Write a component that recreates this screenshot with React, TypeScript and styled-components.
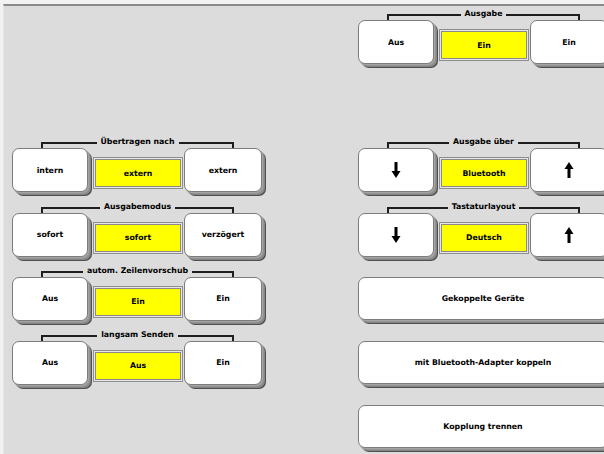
import styled, { createGlobalStyle } from 'styled-components';

const GlobalStyle = createGlobalStyle`
  html, body {
    margin: 0;
    padding: 0;
    overflow: hidden;
    background: #f2f2f2;
    font-family: "DejaVu Sans", Verdana, sans-serif;
  }
`;

const Frame = styled.div`
  width: 604px;
  height: 454px;
  box-sizing: border-box;
  padding: 4px 0 0 3px;
  background: #f2f2f2;
`;

const Panel = styled.div`
  height: 100%;
  box-sizing: border-box;
  border-top: 2px solid #8a8a8a;
  border-left: 1px solid #e6e6e6;
  background: #dcdcdc;
  padding: 2px 0 0 8px;
`;

const Board = styled.div`
  display: grid;
  grid-template-columns: 254px 254px;
  grid-template-rows: repeat(7, 64.2px);
  column-gap: 92px;
`;

const Cell = styled.div<{ $row: number; $col: number }>`
  grid-row: ${(p) => p.$row};
  grid-column: ${(p) => p.$col};
  display: flex;
  flex-direction: column;
`;

const Legend = styled.div`
  display: flex;
  height: 12px;
  margin: 0 32px 0 29px;
`;

const Arm = styled.div<{ $side: 'left' | 'right' }>`
  flex: 1;
  align-self: flex-end;
  height: 6px;
  box-sizing: border-box;
  border-top: 2px solid #1e1e1e;
  border-${(p) => p.$side}: 2px solid #1e1e1e;
`;

const LegendText = styled.span`
  padding: 0 4px;
  font-size: 7.8px;
  font-weight: bold;
  line-height: 12px;
  white-space: nowrap;
  color: #000;
`;

const Row = styled.div`
  display: flex;
  align-items: flex-start;
`;

const Key = styled.button<{ $wide?: boolean; $narrow?: boolean }>`
  width: ${(p) => (p.$wide ? 250 : p.$narrow ? 76 : 78)}px;
  height: ${(p) => (p.$wide ? 43 : 44)}px;
  flex: none;
  box-sizing: border-box;
  padding: 0;
  margin: 0;
  display: flex;
  align-items: center;
  justify-content: center;
  background: #ffffff;
  border: 1px solid #7c7c7c;
  border-radius: 7px;
  box-shadow: 1px 1px 0 #a4a4a4, 2px 2px 0 #939393, 3px 3px 0 #858585,
    4px 4px 0 #4f4f4f;
  font-family: "DejaVu Sans", Verdana, sans-serif;
  font-size: 7.8px;
  font-weight: bold;
  color: #000;
`;

const Indicator = styled.div`
  width: 90px;
  height: 32px;
  flex: none;
  box-sizing: border-box;
  margin: 9px 1px 0 5px;
  padding: 1px;
  border: 1px solid #8e8e8e;
  background: #e6e6e6;
`;

const IndicatorFace = styled.div`
  height: 100%;
  box-sizing: border-box;
  border: 1px solid #8a8a8a;
  background: #ffff00;
  display: flex;
  align-items: center;
  justify-content: center;
  font-size: 7.8px;
  font-weight: bold;
  color: #000;
`;

const Arrow = ({ up }: { up?: boolean }) => (
  <svg width="10" height="16" viewBox="0 0 10 16" style={up ? { transform: 'rotate(180deg)' } : undefined}>
    <rect x="3.5" y="0" width="3" height="10" fill="#000" />
    <polygon points="0.5,9 9.5,9 5,16" fill="#000" />
  </svg>
);

type ToggleProps = {
  row: number;
  col: number;
  title: string;
  left: React.ReactNode;
  value: string;
  right: React.ReactNode;
};

const Toggle = ({ row, col, title, left, value, right }: ToggleProps) => (
  <Cell $row={row} $col={col}>
    <Legend>
      <Arm $side="left" />
      <LegendText>{title}</LegendText>
      <Arm $side="right" />
    </Legend>
    <Row>
      <Key $narrow>{left}</Key>
      <Indicator>
        <IndicatorFace>{value}</IndicatorFace>
      </Indicator>
      <Key>{right}</Key>
    </Row>
  </Cell>
);

const WideCell = styled(Cell)`
  padding-top: 12px;
`;

export default function App() {
  return (
    <Frame>
      <GlobalStyle />
      <Panel>
        <Board>
          <Toggle row={1} col={2} title="Ausgabe" left="Aus" value="Ein" right="Ein" />

          <Toggle row={3} col={1} title="Übertragen nach" left="intern" value="extern" right="extern" />
          <Toggle row={4} col={1} title="Ausgabemodus" left="sofort" value="sofort" right="verzögert" />
          <Toggle row={5} col={1} title="autom. Zeilenvorschub" left="Aus" value="Ein" right="Ein" />
          <Toggle row={6} col={1} title="langsam Senden" left="Aus" value="Aus" right="Ein" />

          <Toggle row={3} col={2} title="Ausgabe über" left={<Arrow />} value="Bluetooth" right={<Arrow up />} />
          <Toggle row={4} col={2} title="Tastaturlayout" left={<Arrow />} value="Deutsch" right={<Arrow up />} />

          <WideCell $row={5} $col={2}>
            <Key $wide>Gekoppelte Geräte</Key>
          </WideCell>
          <WideCell $row={6} $col={2}>
            <Key $wide>mit Bluetooth-Adapter koppeln</Key>
          </WideCell>
          <WideCell $row={7} $col={2}>
            <Key $wide>Kopplung trennen</Key>
          </WideCell>
        </Board>
      </Panel>
    </Frame>
  );
}
